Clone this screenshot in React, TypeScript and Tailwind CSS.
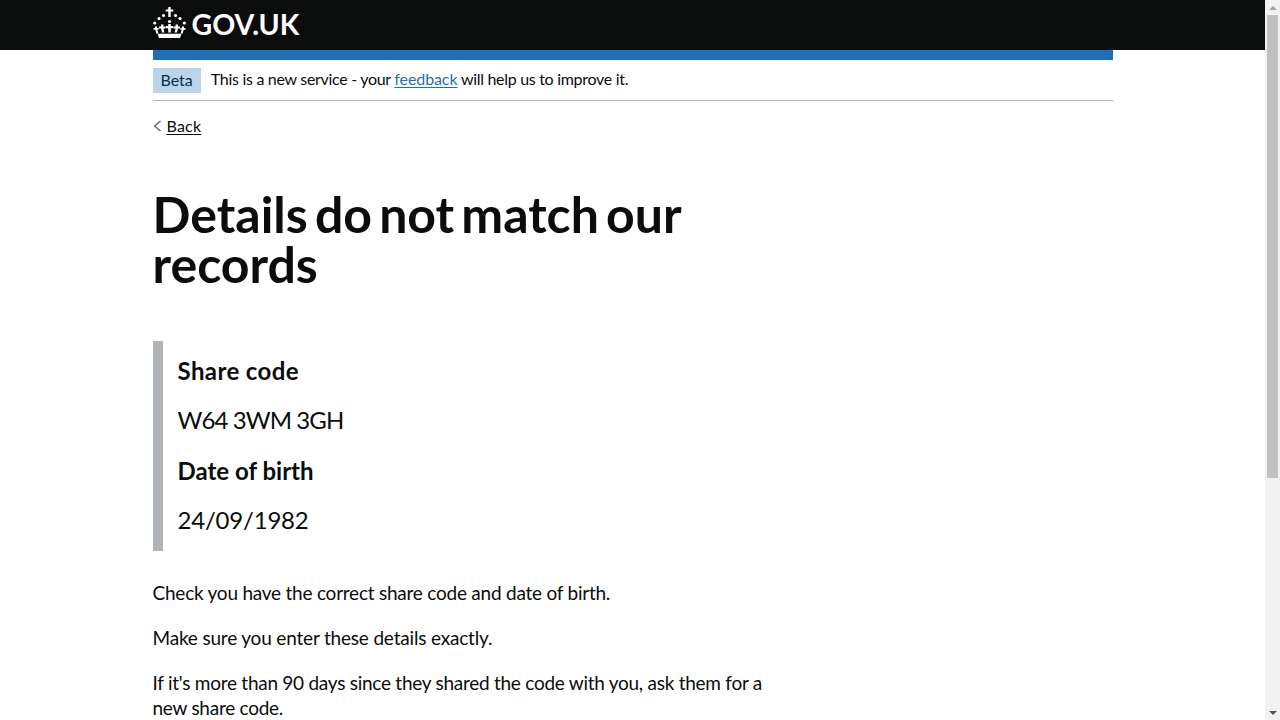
import React from "react";

function Crown() {
  return (
    <svg width="33" height="31" viewBox="0 0 33 31" fill="#fff" className="shrink-0">
      <path d="M15.3 0h2.4v2.4h2.6v2.2h-2.6V10h-2.4V4.6h-2.6V2.4h2.6z" />
      <circle cx="10.5" cy="8.5" r="1.6" />
      <circle cx="22.5" cy="8.5" r="1.6" />
      <circle cx="6" cy="11.5" r="1.6" />
      <circle cx="27" cy="11.5" r="1.6" />
      <circle cx="1.7" cy="16" r="1.6" />
      <circle cx="31.3" cy="16" r="1.6" />
      <circle cx="16.5" cy="14.5" r="1.6" />
      <path d="M15.2 17h2.6v2h2.2v2.2h-2.2v4.3h-2.6v-4.3H13V19h2.2z" />
      <path d="M8 17.5h2.4v2h2.2v2h-2.2l1 4h-2.4l-.9-4H6v-2h2z" />
      <path d="M22.6 17.5H25v2h2v2h-2.1l-.9 4h-2.4l1-4h-2.2v-2h2.2z" />
      <path d="M2 19.5h2v1.5h1.6v1.8H4.2l1.3 3.4-2 .6-1.2-4H.5V21H2z" />
      <path d="M29 19.5h2V21h1.5v1.8h-1.8l-1.2 4-2-.6 1.3-3.4h-1.4V21H29z" />
      <path d="M4.5 26.8h24L27 31H6z" />
    </svg>
  );
}

function Scrollbar() {
  return (
    <aside className="flex h-[720px] w-[15px] shrink-0 flex-col items-center bg-[#f1f1f1]">
      <div className="flex h-[15px] w-full items-center justify-center">
        <div className="h-0 w-0 border-x-[4px] border-b-[4px] border-x-transparent border-b-[#a3a3a3]" />
      </div>
      <div className="h-[463px] w-[11px] bg-[#c1c1c1]" />
      <div className="mt-auto flex h-[15px] w-full items-center justify-center">
        <div className="h-0 w-0 border-x-[4px] border-t-[4px] border-x-transparent border-t-[#505050]" />
      </div>
    </aside>
  );
}

export default function App() {
  return (
    <div className="flex h-[720px] overflow-hidden bg-white text-[#0b0c0c] font-['Lato','Liberation_Sans',sans-serif]">
      <div className="w-[1265px] shrink-0">
        <header className="h-[50px] bg-[#0b0c0c]">
          <div className="mx-auto flex w-[960px] items-start gap-[6px] pt-[7px] text-white">
            <Crown />
            <span className="text-[28.5px] font-bold leading-[34px]">GOV.UK</span>
          </div>
        </header>
        <main className="mx-auto w-[960px]">
          <div className="h-[10px] bg-[#1d70b8]" />
          <div className="flex h-[41px] items-start gap-[10px] border-b border-[#b1b4b6] pt-[8px]">
            <span className="flex h-[25px] items-center bg-[#bbd4ea] px-[8px] pb-[2px] text-[16px] text-[#0c2d4a]">Beta</span>
            <p className="text-[16px] leading-[22px] tracking-[-0.3px]">
              This is a new service - your{" "}
              <a href="#" className="tracking-[-0.1px] text-[#1d70b8] underline underline-offset-2">feedback</a>{" "}
              will help us to improve it.
            </p>
          </div>
          <div className="mt-[12px] flex h-[25px] items-center gap-[5px] text-[16px]">
            <svg className="mt-[1px]" width="9" height="12" viewBox="0 0 9 12" fill="none" stroke="#505a5f" strokeWidth="1.2">
              <path d="M7.5 1L1.5 6l6 5" />
            </svg>
            <a href="#" className="tracking-[0.2px] underline underline-offset-2">Back</a>
          </div>
          <div className="w-[640px]">
            <h1 className="mt-[51px] text-[50px] font-bold leading-[50px] [word-spacing:-5px]">Details do not match our records</h1>
            <div className="mt-[52px] border-l-[10px] border-[#b1b4b6] px-[15px] pt-[15px] pb-[17px]">
              <h2 className="text-[24px] font-bold leading-[29px] tracking-[0.4px]">Share code</h2>
              <p className="mt-[20px] text-[24px] leading-[29px] tracking-[-0.9px]">W64 3WM 3GH</p>
              <h2 className="mt-[22px] text-[24px] font-bold leading-[29px]">Date of birth</h2>
              <p className="mt-[20px] text-[24px] leading-[29px] tracking-[-0.2px]">24/09/1982</p>
            </div>
            <p className="mt-[29px] text-[19px] leading-[25px] tracking-[-0.23px]">Check you have the correct share code and date of birth.</p>
            <p className="mt-[20px] text-[19px] leading-[25px] tracking-[-0.18px]">Make sure you enter these details exactly.</p>
            <p className="mt-[20px] text-[19px] leading-[25px] tracking-[-0.26px]">If it's more than 90 days since they shared the code with you, ask them for a new share code.</p>
          </div>
        </main>
      </div>
      <Scrollbar />
    </div>
  );
}
